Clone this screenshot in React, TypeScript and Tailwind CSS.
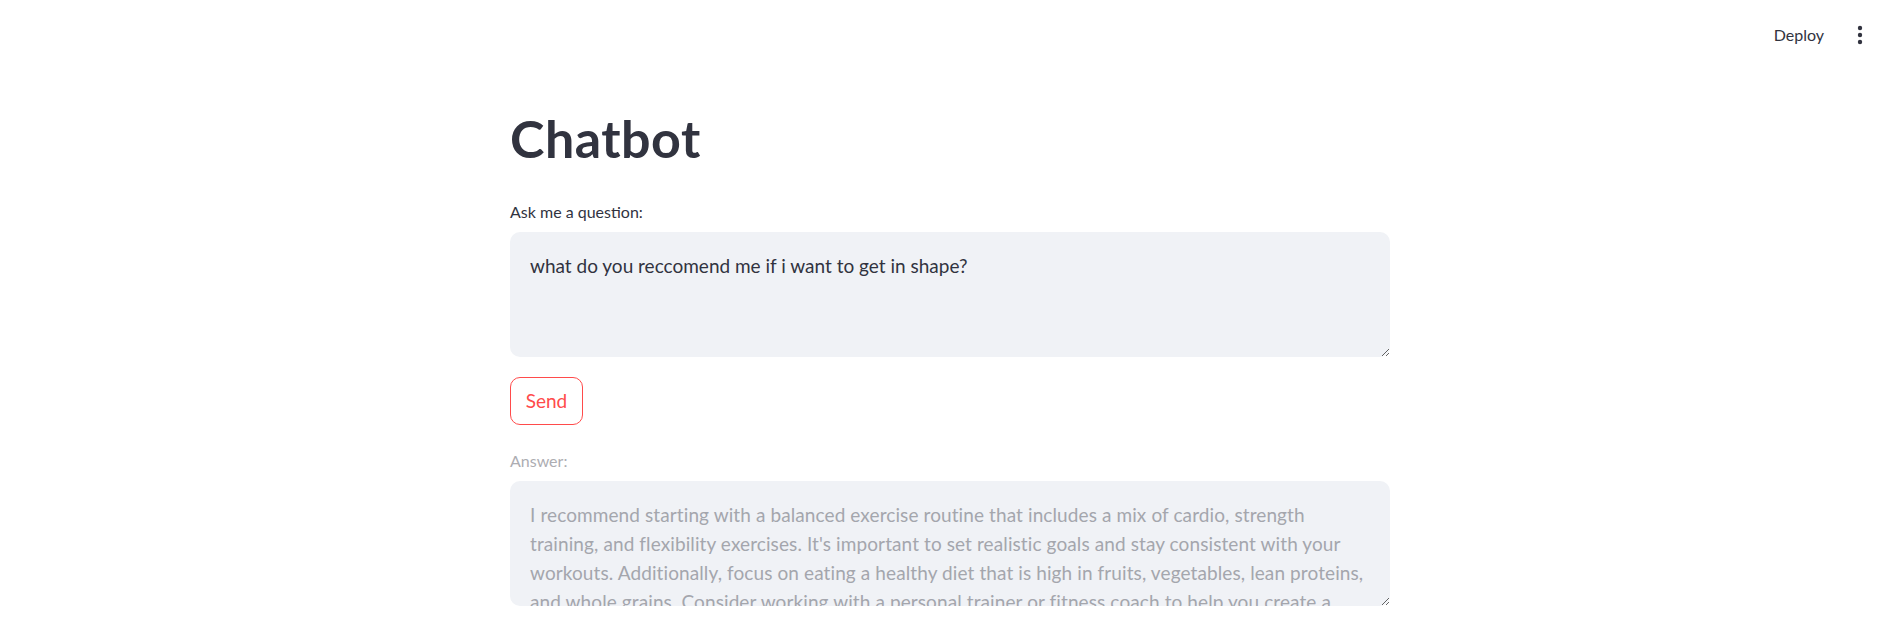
import React from 'react';

const QUESTION = 'what do you reccomend me if i want to get in shape?';

const ANSWER = [
  'I recommend starting with a balanced exercise routine that includes a mix of cardio, strength',
  "training, and flexibility exercises. It's important to set realistic goals and stay consistent with your",
  'workouts. Additionally, focus on eating a healthy diet that is high in fruits, vegetables, lean proteins,',
  'and whole grains. Consider working with a personal trainer or fitness coach to help you create a',
  'personalized plan that fits your needs and abilities.',
].join('\n');

const font = { fontFamily: 'Lato, "Noto Sans", sans-serif' };

const Header: React.FC = () => (
  <header className="flex h-[70px] items-center justify-end gap-[33px] pr-[37px]">
    <button className="text-[16px] text-[#31333f]">Deploy</button>
    <svg width="6" height="20" viewBox="0 0 6 20" className="text-[#31333f]">
      <circle cx="3" cy="3" r="2.2" fill="currentColor" />
      <circle cx="3" cy="10" r="2.2" fill="currentColor" />
      <circle cx="3" cy="17" r="2.2" fill="currentColor" />
    </svg>
  </header>
);

export default function App() {
  return (
    <div className="min-h-screen bg-white text-[#31333f]" style={font}>
      <Header />
      <main className="mx-auto w-[880px]">
        <h1 className="mt-[38px] text-[52px] font-bold leading-[61px] tracking-[0.5px] text-[#31333f]">Chatbot</h1>

        <label className="mt-[31px] block text-[16px] leading-[24px] text-[#31333f]">Ask me a question:</label>
        <textarea
          readOnly
          defaultValue={QUESTION}
          className="mt-[8px] block h-[125px] w-full resize-y rounded-[10px] bg-[#f0f2f6] px-[20px] py-[19px] text-[19px] leading-[29px] text-[#31333f] outline-none"
        />

        <button className="mt-[20px] h-[48px] w-[73px] rounded-[10px] border border-[#ff4b4b] text-[19px] text-[#ff4b4b]">
          Send
        </button>

        <label className="mt-[24px] block text-[16px] leading-[24px] text-[#adadb2]">Answer:</label>
        <textarea
          readOnly
          disabled
          wrap="off"
          defaultValue={ANSWER}
          className="mt-[8px] block h-[125px] w-full resize-y overflow-hidden rounded-[10px] bg-[#f0f2f6] px-[20px] py-[19px] text-[19px] leading-[29px] tracking-[0.1px] text-[#a4a6ad] outline-none"
        />
      </main>
    </div>
  );
}
